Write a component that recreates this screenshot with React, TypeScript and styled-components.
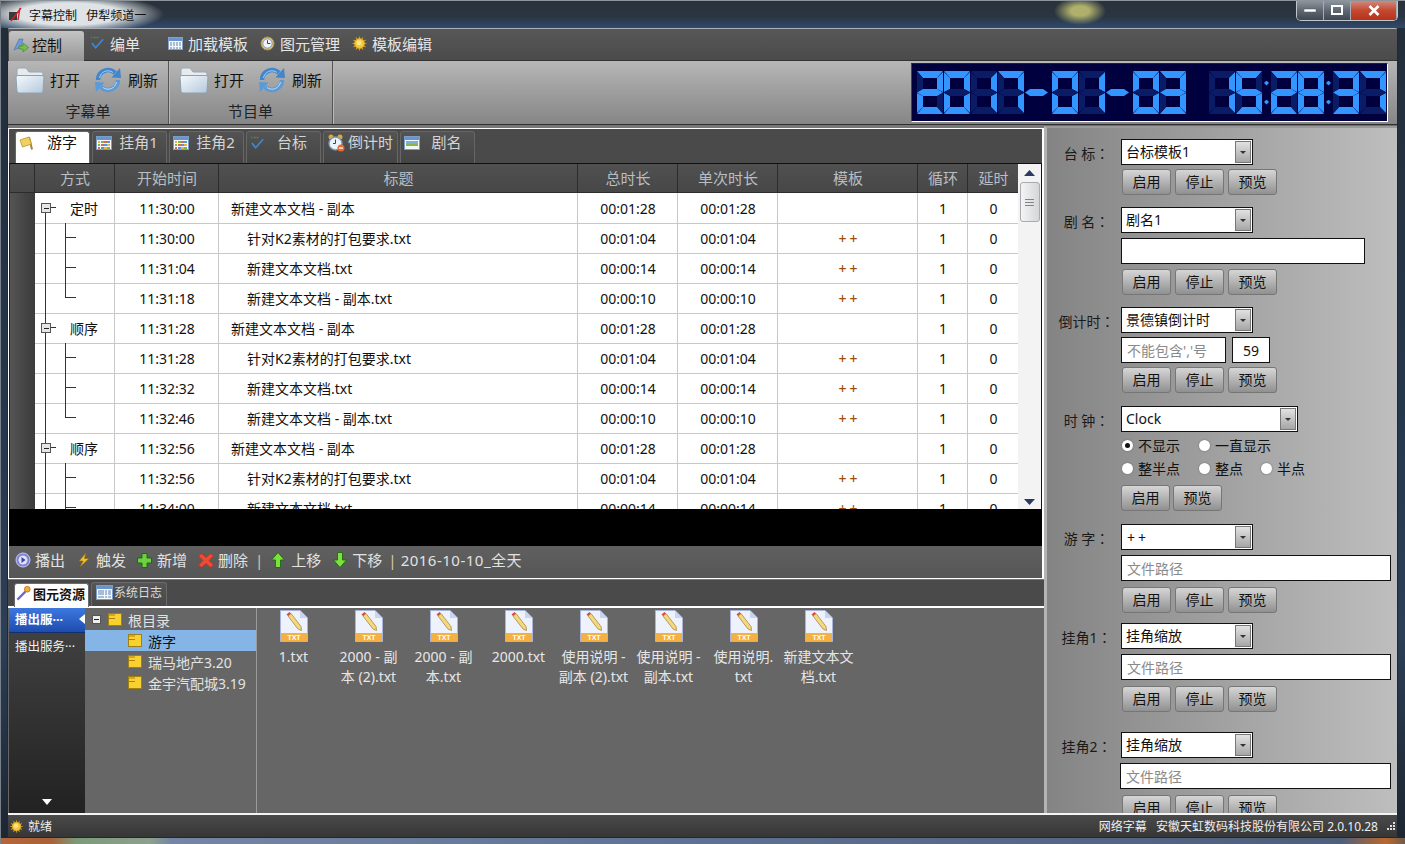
import React from 'react';
import styled, { createGlobalStyle } from 'styled-components';

const Global = createGlobalStyle`
  html, body { margin: 0; padding: 0; overflow: hidden; background: #222; }
  body { font-family: "Noto Sans", "Noto Sans CJK SC", sans-serif; font-size: 14px; }
  * { box-sizing: border-box; }
  svg { display: block; flex: none; }
`;

/* ---------- window chrome ---------- */
const Win = styled.div`
  width: 1405px; height: 844px; display: flex; flex-direction: column; overflow: hidden;
  background:
    linear-gradient(90deg,#b5653a 0,#a8623a 50px,#7c9a78 75px,#8ca08e 150px,#7486a4 170px,#5f7190 700px,#4e5f7c 1340px,#b8682f 1385px,#6a5a50 1405px) bottom/100% 6px no-repeat,
    linear-gradient(180deg,#232d39 0,#26384d 50%,#2c3f57 75%,#1d2530 100%);
  border-top: 1px solid #8c949c;
  border-left: 1px solid #78808a;
`;
const TitleBar = styled.div`
  height: 27px; flex: none; display: flex; align-items: center; padding-left: 7px; gap: 6px;
  font-size: 12px; color: #111; white-space: pre;
  background:
    radial-gradient(ellipse 26px 14px at 1079px 10px,#aeb06c 35%,rgba(150,150,100,0) 100%),
    radial-gradient(ellipse 95px 20px at 68px 13px,#dfe3e6 55%,rgba(210,216,222,0) 100%),
    linear-gradient(180deg,#2a313a 0,#2a3644 60%,#2f4a6c 100%);
`;
const WinBtns = styled.div`
  margin-left: auto; margin-right: 7px; margin-top: -8px; display: flex; height: 20px;
  border: 1px solid #c0c6cc; border-top: 0; border-radius: 0 0 5px 5px; overflow: hidden;
`;
const WinBtn = styled.div<{ $w: number; $close?: boolean }>`
  width: ${p => p.$w}px; display: flex; align-items: center; justify-content: center;
  border-right: 1px solid #a8adb4;
  background: ${p => p.$close
    ? 'linear-gradient(180deg,#d08a7e 0,#c4482f 50%,#b5321d 100%)'
    : 'linear-gradient(180deg,#8d949d 0,#5f6872 50%,#3f4852 100%)'};
`;
const Frame = styled.div`
  width: 1391px; height: 810px; margin-left: 6px; flex: none; display: flex; flex-direction: column;
  border: 1px solid #24282d; border-top-color: #aab0b6; background: #6e6e6e; border-radius: 3px 3px 0 0; overflow: hidden;
`;

/* ---------- menu ---------- */
const MenuBar = styled.div`
  height: 32px; flex: none; display: flex; align-items: flex-end; padding-left: 1px;
  background: linear-gradient(180deg,#575757,#4b4b4b); border-bottom: 1px solid #333;
`;
const MenuTab = styled.div<{ $active?: boolean; $ml?: number }>`
  display: flex; align-items: center; gap: 5px; height: 30px; padding-bottom: 3px;
  margin-left: ${p => p.$ml ?? 12}px; font-size: 15px; line-height: 20px;
  ${p => p.$active
    ? `width: 75px; padding-left: 4px; gap: 2px; color: #111; border-radius: 3px 3px 0 0; margin-bottom: -1px;
       background: linear-gradient(180deg,#c4c4c4,#979797);`
    : `color: #e6e6e6;`}
`;
const Ribbon = styled.div`
  height: 64px; flex: none; display: flex; border-bottom: 1px solid #2e2e2e;
  background: linear-gradient(180deg,#b7b7b7 0,#a2a2a2 40%,#868686 100%);
`;
const RibbonGroup = styled.div<{ $w: number; $pl: number }>`
  width: ${p => p.$w}px; display: flex; flex-direction: column; padding: 3px 0 0 ${p => p.$pl}px;
  border-right: 1px solid #555; box-shadow: 1px 0 0 #b8b8b8;
`;
const RibbonRow = styled.div` display: flex; gap: 14px; `;
const RibbonBtn = styled.div`
  display: flex; align-items: center; gap: 6px; height: 30px; font-size: 15px; color: #111;
  svg { margin-top: 2px; }
`;
const RibbonOpen = styled(RibbonBtn)` gap: 5px; `;
const RibbonLabel = styled.div<{ $pl: number }>`
  margin-top: auto; margin-bottom: 3px; margin-left: -${p => p.$pl}px; text-align: center;
  font-size: 15px; line-height: 20px; color: #222;
`;
const ClockBox = styled.div`
  margin: 2px 9px 2px auto; width: 477px; display: flex; align-items: center; gap: 1px; padding-left: 5px;
  background: #00003f; border: 1px solid #fff; border-top-color: #222; border-left-color: #444;
`;
const Digit = styled.div`
  width: 26px; height: 43px; display: grid; flex: none;
  grid-template-columns: 6px 14px 6px; grid-template-rows: 7px 11px 7px 11px 7px;
`;
const Seg = styled.i<{ $on: boolean; $kind: string }>`
  display: block; background: ${p => p.$on ? '#3395ff' : '#0a1c66'};
  ${p => ({
    a: 'grid-area: 1/1/2/4; clip-path: polygon(0 0,26px 0,20px 7px,6px 7px);',
    f: 'grid-area: 1/1/4/2; clip-path: polygon(0 1px,6px 7px,6px 18px,0 21px);',
    b: 'grid-area: 1/3/4/4; clip-path: polygon(6px 1px,0 7px,0 18px,6px 21px);',
    g: 'grid-area: 3/1/4/4; clip-path: polygon(0 3.5px,6px 0,20px 0,26px 3.5px,20px 7px,6px 7px);',
    e: 'grid-area: 3/1/6/2; clip-path: polygon(0 4px,6px 7px,6px 18px,0 24px);',
    c: 'grid-area: 3/3/6/4; clip-path: polygon(6px 4px,0 7px,0 18px,6px 24px);',
    d: 'grid-area: 5/1/6/4; clip-path: polygon(6px 0,20px 0,26px 7px,0 7px);',
  } as Record<string, string>)[p.$kind]}
`;
const Dash = styled.i`
  display: block; width: 23px; height: 7px; margin-right: 3px; background: #3395ff;
  clip-path: polygon(0 50%,5px 0,18px 0,100% 50%,18px 100%,5px 100%);
`;
const ColonBox = styled.div`
  width: 7px; display: flex; flex-direction: column; align-items: center; gap: 14px;
  i { display: block; width: 5px; height: 5px; background: #3395ff; clip-path: polygon(50% 0,100% 50%,50% 100%,0 50%); }
`;
const Gap = styled.div` width: 21px; flex: none; `;

/* ---------- main ---------- */
const Main = styled.div` flex: 1; min-height: 0; display: flex; `;
const LeftPane = styled.div`
  width: 1036px; flex: none; display: flex; flex-direction: column; padding-top: 3px; background: #777;
`;
const TopPanel = styled.div`
  height: 451px; flex: none; display: flex; flex-direction: column; border: 1px solid #fff; border-right-width: 2px;
  background: #4a4a4a;
`;
const TabStrip = styled.div<{ $h: number }>`
  height: ${p => p.$h}px; flex: none; display: flex; align-items: flex-end; gap: 2px; padding-left: 6px;
  background: #4a4a4a;
`;
const TabItem = styled.div<{ $active?: boolean }>`
  width: 75px; height: 32px; flex: none; display: flex; align-items: center; font-size: 15px; padding: 0 1px 9px 3px;
  border: 1px solid #666; border-bottom: 0; border-radius: 3px 3px 0 0;
  background: ${p => p.$active ? '#fff' : 'linear-gradient(180deg,#535353,#444)'};
  color: ${p => p.$active ? '#111' : '#d4d4d4'};
  span { flex: 1; text-align: center; letter-spacing: 0; white-space: nowrap; padding-bottom: 4px; }
`;
const TableArea = styled.div`
  height: 346px; flex: none; display: flex; background: #fff; border-top: 1px solid #111; border-left: 1px solid #222; border-right: 1px solid #111; overflow: hidden;
`;
const TableScroll = styled.div` width: 1008px; flex: none; overflow: hidden; `;
const COLS = '25px 80px 104px 359px 100px 100px 140px 50px 50px';
const HeadRow = styled.div`
  display: grid; grid-template-columns: ${COLS}; height: 29px;
  background: linear-gradient(180deg,#505050,#474747);
`;
const HeadCell = styled.div`
  display: flex; align-items: center; justify-content: center; font-size: 15px; color: #b7bec4; padding: 0 0 2px 1px;
  border-right: 1px solid #2c2c2c; border-bottom: 1px solid #2c2c2c;
  &:last-child { border-right: 0; }
`;
const DataRow = styled.div` display: grid; grid-template-columns: ${COLS}; height: 30px; `;
const RowHead = styled.div`
  background: linear-gradient(90deg,#555,#444 60%,#3c3c3c); border-bottom: 1px solid #2a2a2a;
`;
const Cell = styled.div<{ $left?: number }>`
  display: flex; align-items: center; justify-content: ${p => p.$left !== undefined ? 'flex-start' : 'center'};
  padding-left: ${p => p.$left ?? 1}px; font-size: 14px; color: #111; white-space: nowrap;
  border-right: 1px solid #c8c8c8; border-bottom: 1px solid #c8c8c8;
  &:last-child { border-right: 0; }
`;
const TreeCell = styled(Cell)` justify-content: flex-start; padding: 0; `;
const Tpl = styled.span` color: #a04c08; letter-spacing: 3px; font-size: 14px; font-weight: 500; margin-left: 3px; `;
const ScrollBar = styled.div`
  flex: 1; display: flex; flex-direction: column; align-items: center; background: #f3f3f3;
  justify-content: space-between; padding: 6px 0 4px;
`;
const Thumb = styled.div`
  width: 20px; height: 40px; margin-top: 6px; margin-bottom: auto; border: 1px solid #a8acb0; border-radius: 3px;
  background: linear-gradient(90deg,#f4f4f4,#d4d6d8); display: flex; flex-direction: column; align-items: center; justify-content: center; gap: 2px;
  i { display: block; width: 9px; height: 1px; background: #80868c; }
`;
const BlackBand = styled.div` height: 37px; flex: none; background: #000; `;
const ToolBar = styled.div`
  height: 32px; flex: none; display: flex; align-items: center; padding: 0 0 4px 6px; color: #e2e2e2; font-size: 15px;
  background: linear-gradient(180deg,#606060,#565656);
`;
const ToolItem = styled.div<{ $gap?: number; $mr?: number }>`
  display: flex; align-items: center; gap: ${p => p.$gap ?? 4}px; margin-right: ${p => p.$mr ?? 11}px; line-height: 20px;
`;
const ToolDate = styled(ToolItem)` letter-spacing: 0.5px; `;
const ToolSep = styled.span<{ $mr: number }>` color: #d8c8a8; margin-right: ${p => p.$mr}px; `;
const Bottom = styled.div` flex: 1; min-height: 0; display: flex; flex-direction: column; margin-top: 1px; background: #666; `;
const LowerTab = styled.div<{ $active?: boolean }>`
  width: ${p => p.$active ? 75 : 76}px; height: 24px; display: flex; align-items: center; gap: 1px; padding: 0 0 5px ${p => p.$active ? 1 : 4}px;
  border: 1px solid #6a6a6a; border-bottom: 0; border-radius: 3px 3px 0 0; white-space: nowrap;
  font-size: ${p => p.$active ? 13 : 12}px; font-weight: ${p => p.$active ? 700 : 400};
  margin-bottom: ${p => p.$active ? -1 : 0}px; position: relative; overflow: hidden;
  color: ${p => p.$active ? '#111' : '#ddd'};
  background: ${p => p.$active ? '#fff' : 'linear-gradient(180deg,#555,#484848)'};
`;
const LowerBody = styled.div` flex: 1; min-height: 0; display: flex; border-top: 2px solid #fff; `;
const SideNav = styled.div`
  width: 76px; flex: none; margin-left: 1px; display: flex; flex-direction: column; align-items: stretch; color: #f0f0f0; font-size: 12.5px;
  background: linear-gradient(180deg,#444 0,#333 50%,#222 100%);
`;
const NavSel = styled.div`
  height: 25px; display: flex; align-items: center; justify-content: space-between; padding: 0 0 3px 6px; font-weight: 700; color: #fff; white-space: nowrap;
  background: linear-gradient(180deg,#3d78e0,#1e4cae); border-bottom: 1px solid #12306e;
`;
const NavItem = styled.div` height: 24px; display: flex; align-items: center; padding-left: 6px; white-space: nowrap; `;
const NavArrow = styled.div` margin: auto auto 8px; `;
const TreePane = styled.div`
  width: 172px; flex: none; display: flex; flex-direction: column; padding-top: 1px; border-right: 1px solid #9a9a9a;
  background: #666; color: #e2e2e2; font-size: 14px;
`;
const TreeRow = styled.div<{ $sel?: boolean; $pl: number }>`
  height: 21px; display: flex; align-items: center; padding-left: ${p => p.$pl}px; gap: 6px; white-space: nowrap;
  ${p => p.$sel ? 'background:#85b4e6; color:#111;' : ''}
`;
const Minus = styled.div`
  width: 9px; height: 9px; background: #eee; border: 1px solid #555; display: flex; align-items: center; justify-content: center; margin-right: 1px;
  i { display: block; width: 5px; height: 1px; background: #222; }
`;
const FileArea = styled.div` flex: 1; display: flex; padding-top: 2px; margin-left: -1px; `;
const FileItem = styled.div`
  width: 75px; flex: none; display: flex; flex-direction: column; align-items: center; text-align: center;
  color: #e6e6e6; font-size: 14px; line-height: 20px; white-space: nowrap;
`;
const FileName = styled.div` margin-top: 5px; `;

/* ---------- right panel ---------- */
const RightPane = styled.div`
  flex: 1; overflow: hidden; padding-top: 1px; border-left: 3px solid #b4b4b4; border-top: 2px solid #9a9a9a; margin-top: 1px;
  background: linear-gradient(90deg,#848484 0,#9e9e9e 45%,#bebebe 100%);
`;
const Group = styled.div<{ $mt: number }>` display: flex; margin-top: ${p => p.$mt}px; `;
const GroupLabel = styled.div`
  width: 74px; height: 26px; flex: none; display: flex; align-items: center; justify-content: center; padding: 2px 0 0 5px;
  font-size: 14px; color: #1a1a1a; white-space: pre;
`;
const Colon = styled.span` font-family: "Noto Sans CJK TC", sans-serif; `;
const Stack = styled.div` display: flex; flex-direction: column; flex: 1; `;
const Line = styled.div<{ $mt?: number; $ml?: number; $gap?: number }>`
  display: flex; gap: ${p => p.$gap ?? 4}px; margin-top: ${p => p.$mt ?? 0}px; margin-left: ${p => p.$ml ?? 0}px;
`;
const Combo = styled.div<{ $w?: number }>`
  width: ${p => p.$w ?? 132}px; height: 26px; display: flex; align-items: center; justify-content: space-between;
  background: #fff; border: 1px solid #111; padding: 1px 1px 1px 4px; color: #111; font-size: 14px; white-space: pre;
`;
const ComboText = styled.span<{ $plus?: boolean }>`
  ${p => p.$plus ? 'letter-spacing: 3px; margin-left: 1px; padding-top: 1px;' : 'padding-bottom: 2px;'}
`;
const ComboBtn = styled.div`
  width: 16px; height: 22px; display: flex; align-items: center; justify-content: center; border: 1px solid #777;
  background: linear-gradient(180deg,#e2e2e2,#a6a6a6);
  i { display: block; width: 0; height: 0; border: 3px solid transparent; border-top: 3px solid #333; border-bottom: 0; }
`;
const Input = styled.div<{ $w: number; $ph?: boolean; $center?: boolean }>`
  width: ${p => p.$w}px; height: 26px; display: flex; align-items: center; background: #fff; border: 1px solid #111;
  padding-left: ${p => p.$center ? 0 : 5}px; justify-content: ${p => p.$center ? 'center' : 'flex-start'};
  color: ${p => p.$ph ? '#8a8a8a' : '#111'}; font-size: 14px;
`;
const Btn = styled.div`
  width: 49px; height: 26px; display: flex; align-items: center; justify-content: center; color: #111; font-size: 14px; padding-bottom: 2px;
  border: 1px solid #767676; border-radius: 3px; background: linear-gradient(180deg,#d6d6d6,#909090);
`;
const RadioRow = styled.div<{ $mt?: number }>` display: flex; height: 22px; align-items: center; margin-left: 1px; margin-top: ${p => p.$mt ?? 0}px; `;
const RadioItem = styled.div<{ $w: number }>`
  width: ${p => p.$w}px; display: flex; align-items: center; gap: 5px; color: #111; font-size: 14px; white-space: nowrap;
`;
const RadioDot = styled.div<{ $on?: boolean }>`
  width: 11px; height: 11px; border-radius: 50%; background: #fff; box-shadow: 0 0 2px #666; display: flex; align-items: center; justify-content: center;
  ${p => p.$on ? '&::after { content: ""; width: 5px; height: 5px; border-radius: 50%; background: #111; }' : ''}
`;

/* ---------- status ---------- */
const Status = styled.div`
  height: 24px; flex: none; display: flex; align-items: center; padding-left: 2px; gap: 5px; border-top: 2px solid #f4f4f4; color: #eee; font-size: 12px;
  background: linear-gradient(180deg,#4a4a4a,#363636); white-space: pre;
`;
const StatusRight = styled.div` margin-left: auto; margin-right: 1px; display: flex; align-items: center; gap: 9px; font-size: 12px; `;

/* ---------- icons ---------- */
const Sun = ({ s = 15 }: { s?: number }) => (
  <svg width={s} height={s} viewBox="0 0 16 16">
    <g stroke="#c99a20" strokeWidth="1.2">
      {[0, 30, 60, 90, 120, 150].map(a => <line key={a} x1="8" y1="0.5" x2="8" y2="15.5" transform={`rotate(${a} 8 8)`} />)}
    </g>
    <circle cx="8" cy="8" r="5.2" fill="#f5c842" stroke="#e0a820" />
    <circle cx="7.4" cy="7.2" r="2.6" fill="#fde68a" />
  </svg>
);
const Check = () => (
  <svg width="15" height="15" viewBox="0 0 16 15">
    <path d="M1 1h1.5M4 1h2M7 1h2" stroke="#4e8a4e" strokeWidth="1.6" />
    <path d="M2 7 L6 12 L14 3" fill="none" stroke="#3a8ad8" strokeWidth="1.8" />
  </svg>
);
const GridIcon = ({ s = 15, colored }: { s?: number; colored?: boolean }) => (
  <svg width={s} height={s} viewBox="0 0 16 16" shapeRendering="crispEdges">
    <rect x="0.5" y="1.5" width="15" height="13" fill="#f4f8fc" stroke="#7a9cc8" />
    <rect x="1" y="2" width="14" height="3" fill="#6a94cc" />
    {[0, 1, 2].map(r => [0, 1, 2, 3].map(c => (
      <rect key={`${r}${c}`} x={2 + c * 3.1} y={6 + r * 2.8} width="2.4" height="2"
        fill={colored ? ['#e8b33c', '#7ab648', '#d86a4a', '#5a94d8'][(r + c) % 4] : '#a8bcd8'} />
    )))}
  </svg>
);
const ClockIcon = () => (
  <svg width="15" height="15" viewBox="0 0 16 16">
    <circle cx="8" cy="8" r="7" fill="#e8c878" stroke="#a88838" />
    <circle cx="8" cy="8" r="5" fill="#eef3fa" stroke="#6a8cc0" />
    <path d="M8 4.5V8H11" fill="none" stroke="#335" strokeWidth="1" />
  </svg>
);
const NavIcon = () => (
  <svg width="17" height="17" viewBox="0 0 17 17">
    <path d="M1 14 L6 3 H10 L8 11 Z" fill="#6f9ad4" stroke="#4a70a8" strokeWidth="0.6" />
    <path d="M6 10H10V7L15.5 11.5L10 16V13H6Z" fill="#74c04c" stroke="#3f8a2a" strokeWidth="0.7" />
  </svg>
);
const FolderBig = () => (
  <svg width="30" height="28" viewBox="0 0 30 28">
    <defs><linearGradient id="fb" x1="0" y1="0" x2="1" y2="1"><stop offset="0" stopColor="#f6f9fc" /><stop offset="1" stopColor="#b4c8dc" /></linearGradient></defs>
    <path d="M2 12V4Q2 2 4 2H11L14 6H26Q28 6 28 8V12Z" fill="#e6ebf0" stroke="#9aa8b4" />
    <path d="M1 11Q1 9.500 3 9.500H27Q29 9.500 29 11L28 25Q28 27 26 27H4Q2 27 2 25Z" fill="url(#fb)" stroke="#8ea0b2" />
  </svg>
);
const Refresh = () => (
  <svg width="28" height="28" viewBox="0 0 28 28">
    <path d="M4 14A10 10 0 0 1 21 7" fill="none" stroke="#3f86cc" strokeWidth="4.500" />
    <path d="M17.500 11.500L27 12L26 2Z" fill="#3f86cc" />
    <path d="M24 14A10 10 0 0 1 7 21" fill="none" stroke="#5a9ad8" strokeWidth="4.500" />
    <path d="M10.500 16.500L1 16L2 26Z" fill="#5a9ad8" />
    <path d="M5.500 12A8.500 8.500 0 0 1 19 6.500" fill="none" stroke="#a9d0f0" strokeWidth="1" />
    <path d="M22.500 16A8.500 8.500 0 0 1 9 21.500" fill="none" stroke="#c0dcf4" strokeWidth="1" />
  </svg>
);
const Flag = () => (
  <svg width="17" height="17" viewBox="0 0 17 17">
    <path d="M10 2L13 14.500" stroke="#a88430" strokeWidth="2" />
    <path d="M1 5L10 2L12.500 9L3.500 12Z" fill="#f0d060" stroke="#b89430" strokeWidth="0.8" />
  </svg>
);
const Alarm = () => (
  <svg width="18" height="18" viewBox="0 0 18 18">
    <circle cx="4" cy="3" r="2.500" fill="#e0a838" /><circle cx="13" cy="3" r="2.500" fill="#e0a838" />
    <circle cx="8.500" cy="9.500" r="6.500" fill="#eaf2fa" stroke="#7a98b8" strokeWidth="1.400" />
    <path d="M8.500 5.500V9.500H6" fill="none" stroke="#346" />
    <circle cx="14" cy="14" r="3.500" fill="#e86a2a" /><rect x="12" y="13.400" width="4" height="1.300" fill="#fff" />
  </svg>
);
const WindowPic = () => (
  <svg width="16" height="14" viewBox="0 0 16 14" shapeRendering="crispEdges">
    <rect x="0.500" y="0.500" width="15" height="13" fill="#f4f6f8" stroke="#7a9cc8" />
    <rect x="1" y="1" width="14" height="2.500" fill="#6a94cc" />
    <rect x="2" y="5" width="12" height="4" fill="#7ab0d8" /><rect x="2" y="8" width="12" height="2" fill="#8ab648" />
  </svg>
);
const PlayIcon = () => (
  <svg width="16" height="16" viewBox="0 0 16 16">
    <circle cx="8" cy="8" r="7" fill="#7c80d8" stroke="#c8ccf0" />
    <circle cx="8" cy="8" r="4.500" fill="#dfe2fa" />
    <path d="M6.500 5L10.500 8L6.500 11Z" fill="#3c40a8" />
  </svg>
);
const Bolt = () => (
  <svg width="14" height="16" viewBox="0 0 14 16"><path d="M9 1L2 9H6L3 15L12 6.500H7.500Z" fill="#f0c030" stroke="#8a6a10" strokeWidth="0.600" /></svg>
);
const Plus = () => (
  <svg width="15" height="15" viewBox="0 0 15 15"><path d="M5 .5H10V5H14.500V10H10V14.500H5V10H.5V5H5Z" fill="#6ed040" stroke="#1a6a1a" /></svg>
);
const Cross = () => (
  <svg width="16" height="15" viewBox="0 0 16 15"><path d="M.5 3L3.500 .5L8 4.500L12.500 .5L15.500 3L11 7.500L15.500 12L12.500 14.500L8 10.500L3.500 14.500L.5 12L5 7.500Z" fill="#f04a30" stroke="#c02a18" strokeWidth="0.600" /></svg>
);
const ArrowV = ({ down }: { down?: boolean }) => (
  <svg width="14" height="16" viewBox="0 0 14 16">
    <g transform={down ? 'rotate(180 7 8)' : undefined}>
      <path d="M7 .5L13.500 8H9.500V15.500H4.500V8H.5Z" fill="#7ee03a" stroke="#1a6a1a" strokeWidth="0.900" />
    </g>
  </svg>
);
const Wand = () => (
  <svg width="16" height="16" viewBox="0 0 17 17">
    <path d="M1.500 15.500L10 7" stroke="#6a6ac8" strokeWidth="2.400" />
    <circle cx="12" cy="4.500" r="3" fill="#f0b030" stroke="#d06a20" />
  </svg>
);
const TxtIcon = () => (
  <svg width="28" height="32" viewBox="0 0 28 32">
    <path d="M.5.5H20L27.500 8V31.500H.5Z" fill="#eef2fc" stroke="#a8b4dc" />
    <path d="M20 .5L27.500 8H20Z" fill="#c8d4f0" />
    <rect x="1" y="23" width="26" height="8" fill="#f4b040" />
    <text x="14" y="30" textAnchor="middle" fontSize="7" fontWeight="700" fill="#fff" fontFamily="Liberation Sans">TXT</text>
    <path d="M18 19L8 6L11 3.500L21 16.500L21.500 20.500Z" fill="#f4d880" stroke="#a88840" strokeWidth="0.800" />
    <path d="M8 6L11 3.500L9.500 2L6.500 4.500Z" fill="#d84a3a" />
  </svg>
);
const FolderSmall = () => (
  <svg width="14" height="13" viewBox="0 0 14 13" shapeRendering="crispEdges">
    <rect x="0.500" y="0.500" width="13" height="12" fill="#f8d030" stroke="#a08010" />
    <rect x="1" y="1" width="6" height="2" fill="#d4a818" />
    <rect x="1" y="5" width="6" height="1" fill="#a88410" />
  </svg>
);
const AppIcon = () => (
  <svg width="15" height="15" viewBox="0 0 15 15">
    <rect x="1" y="5" width="8" height="8" fill="#3a3a3a" />
    <path d="M3 14L13 1M12 1L10 13" fill="none" stroke="#d0202a" strokeWidth="1.400" />
  </svg>
);
const TreeGuide = ({ type }: { type: 'first' | 'group' | 'child' | 'last' }) => (
  <svg width={type === 'first' || type === 'group' ? 35 : 45} height="30" style={{ overflow: 'visible' }} shapeRendering="crispEdges">
    <g stroke="#333" fill="none">
      {type === 'group' && <line x1="10.500" y1="0" x2="10.500" y2="10" />}
      <line x1="10.500" y1={type === 'first' || type === 'group' ? 19 : 0} x2="10.500" y2="30" />
      {(type === 'first' || type === 'group') && <line x1="15" y1="14.500" x2="21" y2="14.500" />}
      {type === 'child' && <line x1="30.500" y1="0" x2="30.500" y2="30" />}
      {type === 'last' && <line x1="30.500" y1="0" x2="30.500" y2="14.500" />}
      {(type === 'child' || type === 'last') && <line x1="30" y1="14.500" x2="41" y2="14.500" />}
    </g>
    {(type === 'first' || type === 'group') && (
      <g shapeRendering="crispEdges">
        <rect x="6.500" y="10.500" width="9" height="9" fill="#e4e6e8" stroke="#555" />
        <line x1="8.500" y1="15" x2="13.500" y2="15" stroke="#222" />
      </g>
    )}
  </svg>
);

/* ---------- data ---------- */
const segMap: Record<string, string> = {
  '0': 'abcdef', '1': 'bc', '2': 'abged', '3': 'abgcd', '4': 'fgbc', '5': 'afgcd', '6': 'afgedc', '7': 'abc', '8': 'abcdefg', '9': 'abcdfg',
};
type TreeType = 'first' | 'group' | 'child' | 'last';
interface Row { tree: TreeType; mode: string; start: string; title: string; total: string; once: string; tpl: string; child: boolean }
const cycle = (mode: string, first: boolean, s: string[]): Row[] => [
  { tree: first ? 'first' : 'group', mode, start: s[0], title: '新建文本文档 - 副本', total: '00:01:28', once: '00:01:28', tpl: '', child: false },
  { tree: 'child', mode: '', start: s[0], title: '针对K2素材的打包要求.txt', total: '00:01:04', once: '00:01:04', tpl: '++', child: true },
  { tree: 'child', mode: '', start: s[1], title: '新建文本文档.txt', total: '00:00:14', once: '00:00:14', tpl: '++', child: true },
  { tree: 'last', mode: '', start: s[2], title: '新建文本文档 - 副本.txt', total: '00:00:10', once: '00:00:10', tpl: '++', child: true },
];
const rows: Row[] = [
  ...cycle('定时', true, ['11:30:00', '11:31:04', '11:31:18']),
  ...cycle('顺序', false, ['11:31:28', '11:32:32', '11:32:46']),
  ...cycle('顺序', false, ['11:32:56', '11:34:00', '11:34:14']).slice(0, 3),
];
const heads = ['', '方式', '开始时间', '标题', '总时长', '单次时长', '模板', '循环', '延时'];
const files = [['1.txt'], ['2000 - 副', '本 (2).txt'], ['2000 - 副', '本.txt'], ['2000.txt'], ['使用说明 -', '副本 (2).txt'], ['使用说明 -', '副本.txt'], ['使用说明.', 'txt'], ['新建文本文', '档.txt']];
const tabs: [string, React.ReactNode][] = [
  ['游字', <Flag />], ['挂角1', <GridIcon s={16} colored />], ['挂角2', <GridIcon s={16} colored />],
  ['台标', <Check />], ['倒计时', <Alarm />], ['剧名', <WindowPic />],
];

const Btns = ({ names, mt, ml, gap }: { names: string[]; mt?: number; ml?: number; gap?: number }) => (
  <Line $mt={mt} $ml={ml ?? 1} $gap={gap}>{names.map(n => <Btn key={n}>{n}</Btn>)}</Line>
);
const Select = ({ text, w }: { text: string; w?: number }) => (
  <Combo $w={w}><ComboText $plus={text === '++'}>{text}</ComboText><ComboBtn><i /></ComboBtn></Combo>
);
const Label = ({ text }: { text: string }) => <GroupLabel>{text}<Colon>：</Colon></GroupLabel>;
const ABC = ['启用', '停止', '预览'];

const RibbonSet = ({ label, w, pl }: { label: string; w: number; pl: number }) => (
  <RibbonGroup $w={w} $pl={pl}>
    <RibbonRow>
      <RibbonOpen><FolderBig />打开</RibbonOpen>
      <RibbonBtn><Refresh />刷新</RibbonBtn>
    </RibbonRow>
    <RibbonLabel $pl={pl}>{label}</RibbonLabel>
  </RibbonGroup>
);

const Clock = ({ value }: { value: string }) => (
  <ClockBox aria-label={value}>
    {value.split('').map((c, i) => {
      if (c === '-') return <Dash key={i} />;
      if (c === ':') return <ColonBox key={i}><i /><i /></ColonBox>;
      if (c === ' ') return <Gap key={i} />;
      return <Digit key={i}>{'abcdefg'.split('').map(k => <Seg key={k} $kind={k} $on={segMap[c].includes(k)} />)}</Digit>;
    })}
  </ClockBox>
);

export default function App() {
  return (
    <Win>
      <Global />
      <TitleBar>
        <AppIcon />
        <span>字幕控制   伊犁频道一</span>
        <WinBtns>
          <WinBtn $w={27}><svg width="12" height="6"><rect x="0" y="2" width="12" height="3" fill="#fff" stroke="#555" strokeWidth="0.500" /></svg></WinBtn>
          <WinBtn $w={27}><svg width="12" height="10"><rect x="1" y="1" width="10" height="8" fill="none" stroke="#fff" strokeWidth="2" /></svg></WinBtn>
          <WinBtn $w={46} $close><svg width="12" height="11"><path d="M1.500 1L10.500 10M10.500 1L1.500 10" stroke="#fff" strokeWidth="2.600" /></svg></WinBtn>
        </WinBtns>
      </TitleBar>
      <Frame>
        <MenuBar>
          <MenuTab $active $ml={0}><NavIcon />控制</MenuTab>
          <MenuTab $ml={6}><Check />编单</MenuTab>
          <MenuTab $ml={28}><GridIcon />加载模板</MenuTab>
          <MenuTab><ClockIcon />图元管理</MenuTab>
          <MenuTab><Sun />模板编辑</MenuTab>
        </MenuBar>
        <Ribbon>
          <RibbonSet label="字幕单" w={161} pl={7} />
          <RibbonSet label="节目单" w={164} pl={10} />
          <Clock value="2017-01-03 15:28:37" />
        </Ribbon>
        <Main>
          <LeftPane>
            <TopPanel>
              <TabStrip $h={34}>
                {tabs.map(([t, ic], i) => <TabItem key={t} $active={i === 0}>{ic}<span>{t}</span></TabItem>)}
              </TabStrip>
              <TableArea>
                <TableScroll>
                  <HeadRow>{heads.map((h, i) => <HeadCell key={i}>{h}</HeadCell>)}</HeadRow>
                  {rows.map((r, i) => (
                    <DataRow key={i}>
                      <RowHead />
                      <TreeCell><TreeGuide type={r.tree} />{r.mode}</TreeCell>
                      <Cell>{r.start}</Cell>
                      <Cell $left={r.child ? 28 : 12}>{r.title}</Cell>
                      <Cell>{r.total}</Cell>
                      <Cell>{r.once}</Cell>
                      <Cell><Tpl>{r.tpl}</Tpl></Cell>
                      <Cell>1</Cell>
                      <Cell>0</Cell>
                    </DataRow>
                  ))}
                </TableScroll>
                <ScrollBar>
                  <svg width="11" height="6"><path d="M0 6L5.500 0L11 6Z" fill="#2c3a60" /></svg>
                  <Thumb><i /><i /><i /></Thumb>
                  <svg width="11" height="6"><path d="M0 0L5.500 6L11 0Z" fill="#2c3a60" /></svg>
                </ScrollBar>
              </TableArea>
              <BlackBand />
              <ToolBar>
                <ToolItem $mr={12}><PlayIcon />播出</ToolItem>
                <ToolItem $gap={5}><Bolt />触发</ToolItem>
                <ToolItem $gap={5}><Plus />新增</ToolItem>
                <ToolItem $mr={7}><Cross />删除</ToolItem>
                <ToolSep $mr={8}>|</ToolSep>
                <ToolItem $gap={6} $mr={12}><ArrowV />上移</ToolItem>
                <ToolItem $gap={5} $mr={6}><ArrowV down />下移</ToolItem>
                <ToolSep $mr={4}>|</ToolSep>
                <ToolDate>2016-10-10_全天</ToolDate>
              </ToolBar>
            </TopPanel>
            <Bottom>
              <TabStrip $h={26}>
                <LowerTab $active><Wand />图元资源</LowerTab>
                <LowerTab><GridIcon s={17} />系统日志</LowerTab>
              </TabStrip>
              <LowerBody>
                <SideNav>
                  <NavSel>播出服···<svg width="6" height="10"><path d="M6 0L0 5L6 10Z" fill="#fff" /></svg></NavSel>
                  <NavItem>播出服务···</NavItem>
                  <NavArrow><svg width="10" height="6"><path d="M0 0H10L5 6Z" fill="#fff" /></svg></NavArrow>
                </SideNav>
                <TreePane>
                  <TreeRow $pl={7}><Minus><i /></Minus><FolderSmall />根目录</TreeRow>
                  <TreeRow $sel $pl={43}><FolderSmall />游字</TreeRow>
                  <TreeRow $pl={43}><FolderSmall />瑞马地产3.20</TreeRow>
                  <TreeRow $pl={43}><FolderSmall />金宇汽配城3.19</TreeRow>
                </TreePane>
                <FileArea>
                  {files.map((f, i) => (
                    <FileItem key={i}>
                      <TxtIcon />
                      <FileName>{f.map(l => <div key={l}>{l}</div>)}</FileName>
                    </FileItem>
                  ))}
                </FileArea>
              </LowerBody>
            </Bottom>
          </LeftPane>
          <RightPane>
            <Group $mt={10}>
              <Label text="台 标" />
              <Stack><Select text="台标模板1" /><Btns names={ABC} mt={4} /></Stack>
            </Group>
            <Group $mt={12}>
              <Label text="剧 名" />
              <Stack><Select text="剧名1" /><Line $mt={5}><Input $w={244} /></Line><Btns names={ABC} mt={5} /></Stack>
            </Group>
            <Group $mt={12}>
              <Label text="倒计时" />
              <Stack>
                <Select text="景德镇倒计时" />
                <Line $mt={4} $gap={6}><Input $w={105} $ph>不能包含','号</Input><Input $w={38} $center>59</Input></Line>
                <Btns names={ABC} mt={4} />
              </Stack>
            </Group>
            <Group $mt={13}>
              <Label text="时 钟" />
              <Stack>
                <Select text="Clock" w={177} />
                <RadioRow $mt={2}>
                  <RadioItem $w={77}><RadioDot $on />不显示</RadioItem>
                  <RadioItem $w={100}><RadioDot />一直显示</RadioItem>
                </RadioRow>
                <RadioRow $mt={1}>
                  <RadioItem $w={77}><RadioDot />整半点</RadioItem>
                  <RadioItem $w={62}><RadioDot />整点</RadioItem>
                  <RadioItem $w={60}><RadioDot />半点</RadioItem>
                </RadioRow>
                <Btns names={['启用', '预览']} mt={6} ml={0} gap={3} />
              </Stack>
            </Group>
            <Group $mt={13}>
              <Label text="游 字" />
              <Stack><Select text="++" /><Line $mt={5}><Input $w={270} $ph>文件路径</Input></Line><Btns names={ABC} mt={6} /></Stack>
            </Group>
            <Group $mt={10}>
              <Label text="挂角1" />
              <Stack><Select text="挂角缩放" /><Line $mt={5}><Input $w={270} $ph>文件路径</Input></Line><Btns names={ABC} mt={6} /></Stack>
            </Group>
            <Group $mt={20}>
              <Label text="挂角2" />
              <Stack><Select text="挂角缩放" /><Line $mt={5} $ml={-1}><Input $w={271} $ph>文件路径</Input></Line><Btns names={ABC} mt={6} /></Stack>
            </Group>
          </RightPane>
        </Main>
        <Status>
          <Sun s={13} />
          <span>就绪</span>
          <StatusRight>
            <span>网络字幕   安徽天虹数码科技股份有限公司 2.0.10.28</span>
            <svg width="9" height="9" shapeRendering="crispEdges" fill="#ddd">
              <rect x="6" y="0" width="2" height="2" /><rect x="3" y="3" width="2" height="2" /><rect x="6" y="3" width="2" height="2" />
              <rect x="0" y="6" width="2" height="2" /><rect x="3" y="6" width="2" height="2" /><rect x="6" y="6" width="2" height="2" />
            </svg>
          </StatusRight>
        </Status>
      </Frame>
    </Win>
  );
}
